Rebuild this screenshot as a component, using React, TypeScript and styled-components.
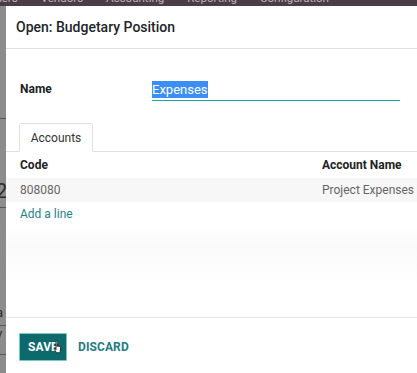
import React from 'react';
import styled, { createGlobalStyle } from 'styled-components';

const GlobalStyle = createGlobalStyle`
  html, body {
    margin: 0;
    padding: 0;
    background: #8a8a8a;
    font-family: Roboto, 'Noto Sans', sans-serif;
    overflow: hidden;
  }
`;

// Odoo top bar behind the dialog, mostly hidden
const TopBar = styled.div`
  height: 6px;
  overflow: hidden;
  background-color: #4b3d48;
`;

const TopMenu = styled.div`
  display: flex;
  gap: 23px;
  margin-top: -9px;
  margin-left: -26px;
  font-size: 11.5px;
  line-height: 14px;
  color: #bdb3ba;
  white-space: nowrap;
`;

const Stage = styled.div`
  display: grid;
  grid-template-columns: 6px 1fr;
  height: 367px;
`;

const Backdrop = styled.div`
  background-color: #8c8c8c;
  display: flex;
  flex-direction: column;
  overflow: hidden;
  color: #2b2b2b;
`;

const BackLine = styled.div<{ $top: number }>`
  margin-top: ${(p) => p.$top}px;
  border-top: 1px solid #555;
  width: 6px;
`;

const BackGlyph = styled.div<{ $top: number; $size: number }>`
  margin-top: ${(p) => p.$top}px;
  margin-left: -4px;
  font-size: ${(p) => p.$size}px;
  line-height: 1;
`;

const Modal = styled.div`
  background: #fff;
  display: flex;
  flex-direction: column;
`;

const Header = styled.div`
  height: 42px;
  display: flex;
  align-items: center;
  padding-left: 10px;
  border-bottom: 1px solid #dee2e6;
`;

const Title = styled.h4`
  margin: 0;
  font-size: 14px;
  font-weight: 500;
  color: #212529;
`;

const Body = styled.div`
  flex: 1;
  display: flex;
  flex-direction: column;
`;

const FieldRow = styled.div`
  display: flex;
  align-items: flex-end;
  padding: 22px 0 0 14px;
  height: 30px;
`;

const Label = styled.label`
  width: 132px;
  font-size: 12px;
  font-weight: 700;
  color: #222;
  padding-bottom: 5px;
`;

const Input = styled.div`
  width: 248px;
  height: 19px;
  border-bottom: 1px solid #1aa6a8;
  font-size: 13px;
  line-height: 18px;
`;

const Selected = styled.span`
  background: #3a8ef6;
  color: #fff;
  padding: 1px 0;
`;

const Tabs = styled.div`
  margin-top: 22px;
  padding-left: 13px;
  border-bottom: 1px solid #dee2e6;
  display: flex;
`;

const Tab = styled.div`
  width: 72px;
  height: 27px;
  display: flex;
  align-items: center;
  justify-content: center;
  font-size: 12px;
  color: #333;
  border: 1px solid #dee2e6;
  border-bottom-color: #fff;
  border-radius: 2px 2px 0 0;
  margin-bottom: -1px;
  background: #fff;
`;

const Table = styled.div`
  display: flex;
  flex-direction: column;
`;

const Row = styled.div<{ $head?: boolean; $shade?: boolean }>`
  display: grid;
  grid-template-columns: 302px 1fr;
  align-items: center;
  height: ${(p) => (p.$head ? 26 : 24)}px;
  padding: 0 0 0 14px;
  font-size: 12px;
  font-weight: ${(p) => (p.$head ? 700 : 400)};
  color: ${(p) => (p.$head ? '#222' : '#666')};
  background: ${(p) => (p.$shade ? '#f7f7f7' : '#fff')};
  box-shadow: ${(p) => (p.$head ? '0 2px 3px rgba(0,0,0,0.06)' : 'none')};
  position: relative;
  white-space: nowrap;
`;

const AddLine = styled.a`
  color: #1d8289;
  font-size: 12px;
  text-decoration: none;
`;

const Spacer = styled.div`
  flex: 1;
  background: linear-gradient(#fff 0, #fafafa 20px, #fff 60px);
`;

const Footer = styled.div`
  height: 52px;
  border-top: 1px solid #e6e6e6;
  display: flex;
  align-items: center;
  gap: 11px;
  padding: 3px 0 0 13px;
`;

const Button = styled.button<{ $primary?: boolean }>`
  position: relative;
  height: ${(p) => (p.$primary ? '28px' : 'auto')};
  padding: 0 ${(p) => (p.$primary ? '8px' : '0')};
  font-family: Roboto, sans-serif;
  font-size: 12px;
  font-weight: 700;
  letter-spacing: 0.1px;
  border: ${(p) => (p.$primary ? '1px solid #7cc6c6' : 'none')};
  background: ${(p) => (p.$primary ? '#0d6a6c' : 'transparent')};
  color: ${(p) => (p.$primary ? '#fff' : '#1f7d85')};
  border-radius: 1px;
`;

const Cursor = styled.svg`
  position: absolute;
  left: 33px;
  top: 6px;
`;

const HandCursor = () => (
  <Cursor width='11' height='14' viewBox='0 0 11 14'>
    <path
      d='M3 1.2c0-.7 1.2-.7 1.2 0V6.5V5c0-.6 1.1-.6 1.1 0v1.5V5.6c0-.6 1.1-.6 1.1 0v1.2c0-.6 1.1-.6 1.1 0v3.2c0 1.3-.6 2.3-1.4 2.8H3.6L1.3 9.4c-.3-.5.3-1 .8-.6L3 9.8z'
      fill='#fff'
      stroke='#222'
      strokeWidth='0.9'
      strokeLinejoin='round'
    />
  </Cursor>
);

function App() {
  return (
    <>
      <GlobalStyle />
      <TopBar>
        <TopMenu>
          <span>Partners</span>
          <span>Vendors</span>
          <span>Accounting</span>
          <span>Reporting</span>
          <span>Configuration</span>
        </TopMenu>
      </TopBar>
      <Stage>
        <Backdrop>
          <BackLine $top={112} />
          <BackGlyph $top={62} $size={20}>2</BackGlyph>
          <BackLine $top={6} />
          <BackGlyph $top={98} $size={13}>a</BackGlyph>
          <BackLine $top={6} />
          <BackGlyph $top={4} $size={16}>/</BackGlyph>
          <BackLine $top={8} />
        </Backdrop>
        <Modal>
          <Header>
            <Title>Open: Budgetary Position</Title>
          </Header>
          <Body>
            <FieldRow>
              <Label>Name</Label>
              <Input>
                <Selected>Expenses</Selected>
              </Input>
            </FieldRow>
            <Tabs>
              <Tab>Accounts</Tab>
            </Tabs>
            <Table>
              <Row $head>
                <span>Code</span>
                <span>Account Name</span>
              </Row>
              <Row $shade>
                <span>808080</span>
                <span>Project Expenses</span>
              </Row>
              <Row>
                <AddLine href='#'>Add a line</AddLine>
              </Row>
            </Table>
            <Spacer />
          </Body>
          <Footer>
            <Button $primary>
              SAVE
              <HandCursor />
            </Button>
            <Button>DISCARD</Button>
          </Footer>
        </Modal>
      </Stage>
    </>
  );
}

export default App;
